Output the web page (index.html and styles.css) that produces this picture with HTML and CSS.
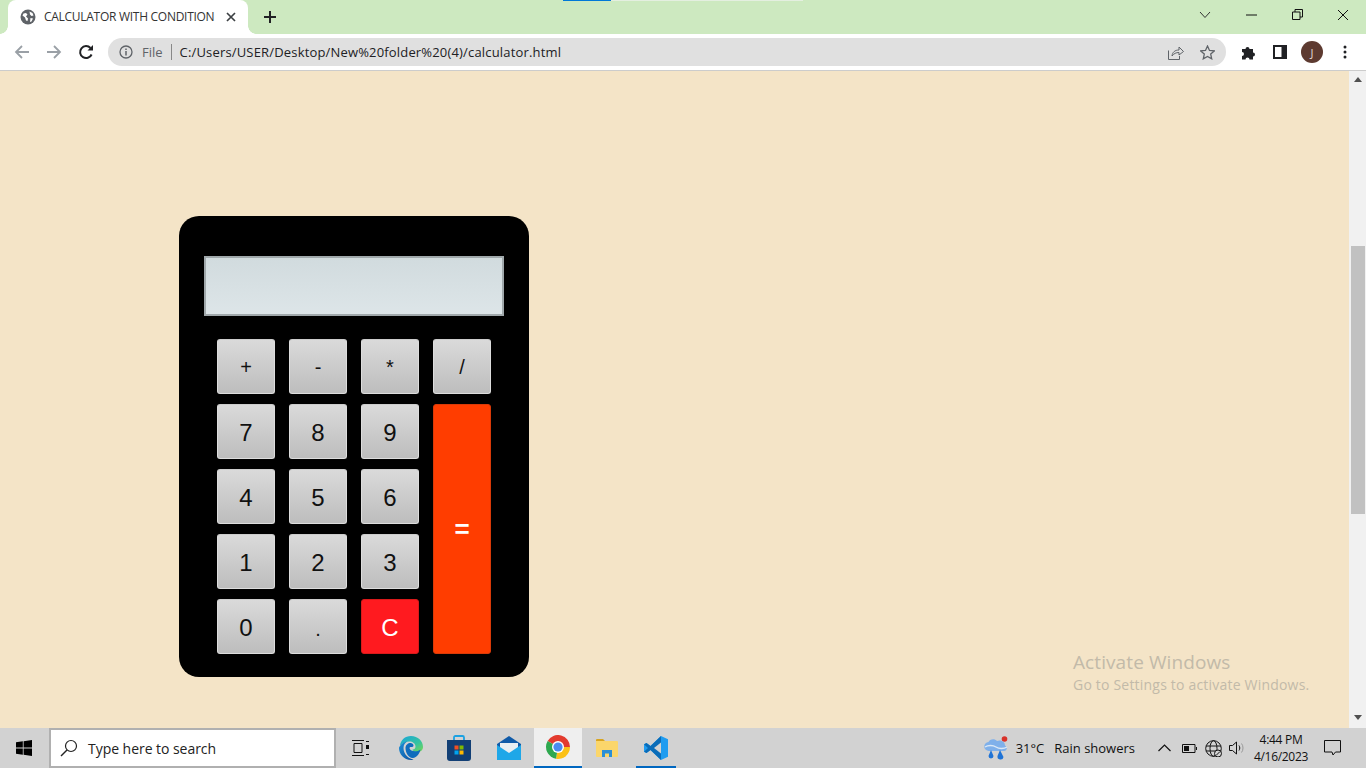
FILE: index.html
```html
<!DOCTYPE html>
<html lang="en">
<head>
    <meta charset="utf-8">
    <link rel="stylesheet" href="styles.css">
    <title>CALCULATOR WITH CONDITION</title>
</head>
<body>
    <!-- browser tab strip -->
    <header class="tabstrip">
        <span class="bar-blue"></span>
        <span class="bar-pale"></span>
        <div class="tab">
            <svg class="favicon" width="16" height="16" viewBox="0 0 16 16"><circle cx="8" cy="8" r="7.500" fill="#5f6368"/><path d="M3.500 4.500l2.500-.5 1.500 1.500L6 7.500l2 2-.5 2.500-1.500-.5-1-3-2.500-2zM9.500 2.500l3 1.500 1 2.500-2 .5-1.500-1.500zM10.500 9l2.500.5-1.500 3-1.500.5z" fill="#fff"/></svg>
            <span class="tab-title">CALCULATOR WITH CONDITION</span>
            <svg class="tab-close" width="10" height="10" viewBox="0 0 10 10"><path d="M1 1l8 8M9 1l-8 8" stroke="#3c4043" stroke-width="1.700"/></svg>
        </div>
        <svg class="new-tab" width="12" height="12" viewBox="0 0 12 12"><path d="M6 0v12M0 6h12" stroke="#202124" stroke-width="2"/></svg>
        <div class="win-controls">
            <span class="win-btn"><svg width="12" height="8" viewBox="0 0 12 8"><path d="M1 1l5 5.500L11 1" fill="none" stroke="#333" stroke-width="1"/></svg></span>
            <span class="win-btn"><svg width="11" height="2" viewBox="0 0 11 2"><path d="M0 1h11" stroke="#111" stroke-width="1"/></svg></span>
            <span class="win-btn"><svg width="11" height="11" viewBox="0 0 11 11"><path d="M.5 3h7.500v7.500H.5zM3 3V.5h7.500V8H8" fill="none" stroke="#111" stroke-width="1"/></svg></span>
            <span class="win-btn"><svg width="12" height="12" viewBox="0 0 12 12"><path d="M1 1l10 10M11 1L1 11" stroke="#111" stroke-width="1"/></svg></span>
        </div>
    </header>

    <!-- address bar -->
    <nav class="toolbar">
        <svg class="nav-icon" width="16" height="16" viewBox="0 0 16 16"><path d="M15 8H2M8 2L2 8l6 6" fill="none" stroke="#9aa0a6" stroke-width="1.800"/></svg>
        <svg class="nav-icon" width="16" height="16" viewBox="0 0 16 16"><path d="M1 8h13M8 2l6 6-6 6" fill="none" stroke="#9aa0a6" stroke-width="1.800"/></svg>
        <svg class="nav-icon" width="16" height="16" viewBox="0 0 16 16"><path d="M13.600 10.500A6 6 0 1 1 12.500 4" fill="none" stroke="#202124" stroke-width="2"/><path d="M9.500 6.500H15V1z" fill="#202124"/></svg>
        <div class="omnibox">
            <svg width="14" height="14" viewBox="0 0 14 14"><circle cx="7" cy="7" r="6" fill="none" stroke="#5f6368" stroke-width="1.300"/><path d="M7 6v4.500M7 3.500v1.500" stroke="#5f6368" stroke-width="1.500"/></svg>
            <span class="omni-file">File</span>
            <span class="omni-sep"></span>
            <span class="omni-url">C:/Users/USER/Desktop/New%20folder%20(4)/calculator.html</span>
            <svg class="omni-share" width="16" height="15" viewBox="0 0 16 15"><path d="M.5 5.500v9h11V11" fill="none" stroke="#5f6368"/><path d="M4 11c.5-4 3-6 7-6V2l4.500 4.500L11 10V7.500c-3 0-5 1-7 3.500z" fill="none" stroke="#5f6368"/></svg>
            <svg class="omni-star" width="15" height="15" viewBox="0 0 15 15"><path d="M7.500 1l2 4.400 4.800.5-3.600 3.200 1 4.700-4.200-2.400-4.200 2.400 1-4.700L.7 5.900l4.800-.5z" fill="none" stroke="#5f6368" stroke-width="1.300"/></svg>
        </div>
        <svg class="ext-icon" width="16" height="16" viewBox="0 0 16 16"><path d="M1 5h3.500a2 2 0 1 1 4 0H12v3.500a2 2 0 1 1 0 4V15.500H8.500a2 2 0 1 0-4 0H1v-3.500a2 2 0 1 0 0-4z" fill="#202124"/></svg>
        <svg class="panel-icon" width="14" height="14" viewBox="0 0 14 14"><path d="M0 0h14v14H0z" fill="#202124"/><path d="M2 2h6.500v10H2z" fill="#fff"/></svg>
        <span class="avatar">J</span>
        <svg class="menu-icon" width="4" height="14" viewBox="0 0 4 14"><circle cx="2" cy="2" r="1.500" fill="#202124"/><circle cx="2" cy="7" r="1.500" fill="#202124"/><circle cx="2" cy="12" r="1.500" fill="#202124"/></svg>
    </nav>

    <div class="viewport">
        <main class="page">
            <div class="calculator">
                <div class="screen"></div>
                <div class="keys">
                    <button class="key op">+</button>
                    <button class="key op">-</button>
                    <button class="key op">*</button>
                    <button class="key op">/</button>
                    <button class="key">7</button>
                    <button class="key">8</button>
                    <button class="key">9</button>
                    <button class="key equals">=</button>
                    <button class="key">4</button>
                    <button class="key">5</button>
                    <button class="key">6</button>
                    <button class="key">1</button>
                    <button class="key">2</button>
                    <button class="key">3</button>
                    <button class="key">0</button>
                    <button class="key dot">.</button>
                    <button class="key clear">C</button>
                </div>
            </div>
            <div class="activate">
                <div class="activate-title">Activate Windows</div>
                <div class="activate-sub">Go to Settings to activate Windows.</div>
            </div>
        </main>
        <aside class="scrollbar">
            <span class="arrow-up"></span>
            <span class="thumb"></span>
            <span class="arrow-down"></span>
        </aside>
    </div>

    <!-- windows taskbar -->
    <footer class="taskbar">
        <span class="start">
            <svg width="16" height="16" viewBox="0 0 16 16"><path d="M0 2.300l6.800-1v6.300H0zM7.600 1.200L16 0v7.600H7.600zM0 8.400h6.800v6.300l-6.800-1zM7.600 8.400H16V16l-8.400-1.200z" fill="#000"/></svg>
        </span>
        <div class="search">
            <svg width="18" height="18" viewBox="0 0 18 18"><circle cx="11" cy="7" r="5.500" fill="none" stroke="#222" stroke-width="1.200"/><path d="M7 11l-6 6" stroke="#222" stroke-width="1.400"/></svg>
            <span>Type here to search</span>
        </div>
        <span class="tile tile-tasks">
            <svg width="17" height="16" viewBox="0 0 17 16"><path d="M0 .5h12M0 15.500h12M2 3.500h8v9H2z" fill="none" stroke="#111" stroke-width="1"/><path d="M14 1.500h3M14 14.500h3" stroke="#111"/><path d="M14 5h3v4h-3z" fill="#111"/></svg>
        </span>
        <span class="tile">
            <svg width="24" height="24" viewBox="0 0 24 24">
                <defs>
                    <linearGradient id="edgeA" x1="0" y1="0" x2="1" y2="1"><stop offset="0" stop-color="#1aa5dc"/><stop offset=".6" stop-color="#35c3a0"/><stop offset="1" stop-color="#7ad94f"/></linearGradient>
                    <linearGradient id="edgeB" x1="0" y1="0" x2="1" y2="1"><stop offset="0" stop-color="#1e90d8"/><stop offset="1" stop-color="#0c4f9e"/></linearGradient>
                </defs>
                <path d="M12 0c7 0 12 5 12 11 0 3-2.500 5-5.500 5-3 0-5-1-5-2.500 2 0 3-1 3-3 0-3-3-5-6-5S3 7 1 10C1.500 4 6 0 12 0z" fill="url(#edgeA)"/>
                <path d="M1 10c2-3 5-4.500 7.500-4.500-2.500 1-4 3.500-4 6.500 0 6 5 11 10 11.500C13.500 24 12.800 24 12 24 5 24 0 18 0 12c0-.7.500-1.500 1-2z" fill="url(#edgeB)"/>
                <path d="M6.500 12c0-3 2.500-5 5-5 1.500 0 3 1 3 2.500 0 1-1 1.500-2.500 1.500-2 0-2 2 .5 3.500 2 1 6 1.500 9-1-1 5-5 9-8 8.500-4-.5-7-5-7-10z" fill="#0f6cbd"/>
            </svg>
        </span>
        <span class="tile tile-store">
            <svg width="24" height="26" viewBox="0 0 24 26"><path d="M7 6V2.500C7 1.500 7.500 1 8.500 1h7c1 0 1.500.5 1.500 1.500V6" fill="none" stroke="#1ba1e2" stroke-width="1.800"/><path d="M0 5h24v18a3 3 0 0 1-3 3H3a3 3 0 0 1-3-3z" fill="#123f75"/><path d="M7.500 10.500h4v4h-4z" fill="#f25022"/><path d="M12.500 10.500h4v4h-4z" fill="#7fba00"/><path d="M7.500 15.500h4v4h-4z" fill="#00a4ef"/><path d="M12.500 15.500h4v4h-4z" fill="#ffb900"/></svg>
        </span>
        <span class="tile">
            <svg width="24" height="24" viewBox="0 0 24 24"><path d="M12 0l12 8v16H0V8z" fill="#0f5aa8"/><path d="M3 7h18v8l-9 5-9-5z" fill="#e8eef2"/><path d="M0 9l12 8 12-8v15H0z" fill="#1ea7e8"/></svg>
        </span>
        <span class="tile tile-active">
            <svg width="24" height="24" viewBox="0 0 24 24"><path d="M12 12L1.600 6A12 12 0 0 1 24 12z" fill="#e33b2e"/><path d="M12 12H24A12 12 0 0 1 10 23.800z" fill="#fbc116"/><path d="M12 12L10 23.800A12 12 0 0 1 1.600 6z" fill="#2fa84f"/><circle cx="12" cy="12" r="6" fill="#fff"/><circle cx="12" cy="12" r="4.600" fill="#4a8cf0"/></svg>
        </span>
        <span class="tile">
            <svg width="22" height="18" viewBox="0 0 22 18"><path d="M0 1a1 1 0 0 1 1-1h6l2 2H0z" fill="#d9a520"/><path d="M0 2h21a1 1 0 0 1 1 1v14a1 1 0 0 1-1 1H1a1 1 0 0 1-1-1z" fill="#fbd66b"/><path d="M6 11h10v7h-3v-3.500H9V18H6z" fill="#2b8fd6"/></svg>
        </span>
        <span class="tile tile-open">
            <svg width="24" height="24" viewBox="0 0 24 24"><path d="M17 0l7 3.200v17.600L17 24 6.500 14 2.500 17 0 15.800V8.200L2.500 7l4 3z" fill="#1f9cf0"/><path d="M17 0v24L6.500 14l-4 3L0 15.800 4 12 0 8.200 2.500 7l4 3z" fill="#0a6cb8"/><path d="M17 6.500L10 12l7 5.500z" fill="#d2d2d2"/></svg>
        </span>
        <div class="tray">
            <svg class="weather" width="25" height="24" viewBox="0 0 25 24"><circle cx="20.500" cy="3" r="2.800" fill="#d8322a"/><path d="M5 15a4.500 4.500 0 0 1-.5-9c1-3 6-4 8.500-1 3-1.500 8 0 8 4.500 2.500 1 2.500 5.500-1 5.500z" fill="#7fb0ea"/><path d="M1 11c3-2 8-2 11 0s8 2 11 0" fill="none" stroke="#dbe8f6" stroke-width="1.500"/><path d="M7 14l-2.500 6a2.500 2.500 0 0 0 5 0zM16 14l-2.500 6a3 3 0 0 0 6 1z" fill="#1f73d6"/></svg>
            <span class="temp">31°C</span>
            <span class="cond">Rain showers</span>
            <svg class="chev" width="13" height="8" viewBox="0 0 13 8"><path d="M.5 7l6-6 6 6" fill="none" stroke="#111" stroke-width="1.200"/></svg>
            <svg class="batt" width="15" height="9" viewBox="0 0 15 9"><path d="M.5.500h12.500v8H.5z" fill="none" stroke="#111"/><path d="M2 2h5v5H2z" fill="#111"/><path d="M14 3h1v3h-1z" fill="#111"/></svg>
            <svg class="globe" width="17" height="17" viewBox="0 0 17 17"><circle cx="8.500" cy="8.500" r="7.800" fill="none" stroke="#111"/><ellipse cx="8.500" cy="8.500" rx="3.500" ry="7.800" fill="none" stroke="#111"/><path d="M1 6h15M1 11h15" stroke="#111"/><circle cx="13" cy="13.500" r="3.500" fill="#d2d2d2" stroke="#111"/><path d="M11 15.500l4-4" stroke="#111"/></svg>
            <svg class="vol" width="16" height="14" viewBox="0 0 16 14"><path d="M.5 4.500h3L7.500 1v12l-4-3.500h-3z" fill="none" stroke="#111"/><path d="M10 4.500c1 1.500 1 3.500 0 5" fill="none" stroke="#111"/><path d="M12.500 2.500c2 2.500 2 6.500 0 9" fill="none" stroke="#999"/></svg>
            <div class="clock"><span>4:44 PM</span><span>4/16/2023</span></div>
            <svg class="notif" width="17" height="16" viewBox="0 0 17 16"><path d="M.5.500h16v11.500h-5L9 15l-1-3H.5z" fill="none" stroke="#111"/></svg>
        </div>
    </footer>
</body>
</html>
```

FILE: styles.css
```css
* {
    box-sizing: border-box;
}

html,
body {
    margin: 0;
    height: 768px;
    overflow: hidden;
}

body {
    display: flex;
    flex-direction: column;
    font-family: "Open Sans", "Liberation Sans", sans-serif;
}

svg {
    display: block;
    flex: none;
}

/* tab strip */
.tabstrip {
    position: relative;
    display: flex;
    align-items: center;
    height: 34px;
    flex: none;
    background-color: #cde9c0;
}

.bar-blue,
.bar-pale {
    position: absolute;
    top: 0;
    height: 1px;
}

.bar-blue {
    left: 563px;
    width: 48px;
    background-color: #0078d7;
}

.bar-pale {
    left: 611px;
    width: 192px;
    background-color: #e4efe0;
}

.tab {
    position: relative;
    display: flex;
    align-items: center;
    align-self: flex-end;
    width: 240px;
    height: 34px;
    margin-left: 8px;
    padding-left: 12px;
    padding-bottom: 1px;
    background-color: #fff;
    border-radius: 8px 8px 0 0;
}

.tab::before,
.tab::after {
    content: "";
    position: absolute;
    bottom: 0;
    width: 8px;
    height: 8px;
}

.tab::before {
    left: -8px;
    background: radial-gradient(circle at 0 0, #cde9c0 7.500px, #fff 8px);
}

.tab::after {
    right: -8px;
    background: radial-gradient(circle at 100% 0, #cde9c0 7.500px, #fff 8px);
}

.tab-title {
    margin-left: 8px;
    font-size: 12px;
    letter-spacing: -0.28px;
    color: #333;
    white-space: nowrap;
}

.tab-close {
    margin-left: 12px;
}

.new-tab {
    margin-left: 16px;
}

.win-controls {
    display: flex;
    margin-left: auto;
    align-self: flex-start;
}

.win-btn {
    display: flex;
    align-items: center;
    justify-content: center;
    width: 46px;
    height: 29px;
}

/* address bar */
.toolbar {
    display: flex;
    align-items: center;
    height: 37px;
    flex: none;
    padding-left: 14px;
    background-color: #fff;
    border-bottom: 1px solid #ccc;
}

.nav-icon {
    margin-right: 16px;
}

.omnibox {
    display: flex;
    align-items: center;
    width: 1118px;
    height: 28px;
    margin-left: -2px;
    padding: 0 11px;
    background-color: #e0e0e0;
    border-radius: 14px;
    font-size: 13px;
}

.omni-file {
    margin-left: 9px;
    color: #5f6368;
}

.omni-sep {
    width: 1px;
    height: 16px;
    margin: 0 8px;
    background-color: #888;
}

.omni-url {
    color: #202124;
    letter-spacing: 0.17px;
}

.omni-share {
    margin-left: auto;
}

.omni-star {
    margin-left: 16px;
}

.ext-icon {
    margin-left: 15px;
}

.panel-icon {
    margin-left: 16px;
}

.avatar {
    display: flex;
    align-items: center;
    justify-content: center;
    width: 22px;
    height: 22px;
    margin-left: 14px;
    border-radius: 50%;
    background-color: #5d3a30;
    color: #e6d9d4;
    font-size: 11px;
    flex: none;
}

.menu-icon {
    margin-left: 20px;
}

/* page area */
.viewport {
    display: flex;
    flex: 1;
    min-height: 0;
}

.page {
    position: relative;
    flex: 1;
    padding: 145px 0 0 179px;
    background-color: #f4e4c7;
}

.calculator {
    width: 350px;
    height: 461px;
    padding: 40px 25px 0;
    background-color: #000;
    border-radius: 20px;
}

.screen {
    height: 60px;
    background: linear-gradient(#d1dbde, #dde5e8);
    border: 2px solid #a0a8ab;
}

.keys {
    display: grid;
    grid-template-columns: repeat(4, 58px);
    grid-auto-rows: 55px;
    gap: 10px 14px;
    margin-top: 23px;
    padding-left: 13px;
}

.key {
    padding: 2px 0 0;
    border: 1px solid #ddd;
    border-top-color: #ccc;
    border-radius: 3px;
    background: linear-gradient(#dadada, #bdbdbd);
    color: #111;
    font-family: "Liberation Sans", Arial, sans-serif;
    font-size: 24px;
}

.op {
    font-size: 20px;
}

.dot {
    padding-top: 6px;
    font-size: 20px;
}

.equals {
    grid-column: 4;
    grid-row: 2 / span 4;
    padding-top: 0;
    background: #ff3d00;
    border: 1px solid #d93a08;
    color: #fff;
    font-size: 26px;
    font-weight: bold;
}

.clear {
    background: #ff1a1f;
    border: 1px solid #d81a1a;
    color: #fff;
}

.activate {
    position: absolute;
    left: 1073px;
    top: 578px;
    color: #c2baa9;
    white-space: nowrap;
}

.activate-title {
    font-size: 19px;
    letter-spacing: 0.09px;
}

.activate-sub {
    font-size: 14px;
    letter-spacing: 0.2px;
}

.scrollbar {
    display: flex;
    flex-direction: column;
    align-items: center;
    width: 17px;
    flex: none;
    background-color: #f1f1f1;
}

.arrow-up,
.arrow-down {
    width: 0;
    height: 0;
    border-left: 4px solid transparent;
    border-right: 4px solid transparent;
}

.arrow-up {
    margin-top: 6px;
    border-bottom: 5px solid #505050;
}

.arrow-down {
    margin-top: 201px;
    border-top: 5px solid #505050;
}

.thumb {
    width: 14px;
    height: 268px;
    margin-top: 164px;
    margin-left: 1px;
    background-color: #c1c1c1;
}

/* taskbar */
.taskbar {
    display: flex;
    align-items: center;
    height: 40px;
    flex: none;
    background-color: #d2d2d2;
}

.start {
    display: flex;
    justify-content: center;
    width: 48px;
    margin-right: 1px;
}

.search {
    display: flex;
    align-items: center;
    width: 287px;
    height: 40px;
    margin-left: 0;
    padding-left: 9px;
    background-color: #fff;
    border: 2px solid #b0b0b0;
    font-size: 14px;
    color: #222;
    letter-spacing: -0.04px;
}

.search span {
    margin-left: 10px;
}

.tile {
    display: flex;
    align-items: center;
    justify-content: center;
    width: 48px;
    height: 40px;
    margin-right: 1px;
}

.tile-tasks {
    margin-right: 3px;
}

.tile-store svg {
    margin-left: -2px;
}

.tile-active {
    width: 48px;
    background-color: #efefef;
    border-bottom: 2px solid #0067c0;
}

.tile-open {
    background: linear-gradient(#0067c0, #0067c0) no-repeat 4px 100% / 40px 2px;
}

.tray {
    display: flex;
    align-items: center;
    margin-left: auto;
    font-size: 13px;
    color: #111;
}

.temp {
    margin-left: 7px;
}

.cond {
    margin-left: 10px;
}

.chev {
    margin-left: 23px;
}

.batt {
    margin-left: 11px;
}

.globe {
    margin-left: 8px;
}

.vol {
    margin-left: 7px;
}

.clock {
    display: flex;
    flex-direction: column;
    align-items: center;
    width: 62px;
    margin-left: 5px;
    font-size: 12px;
    line-height: 17px;
    letter-spacing: -0.3px;
}

.notif {
    margin-left: 12px;
    margin-right: 25px;
}
```
